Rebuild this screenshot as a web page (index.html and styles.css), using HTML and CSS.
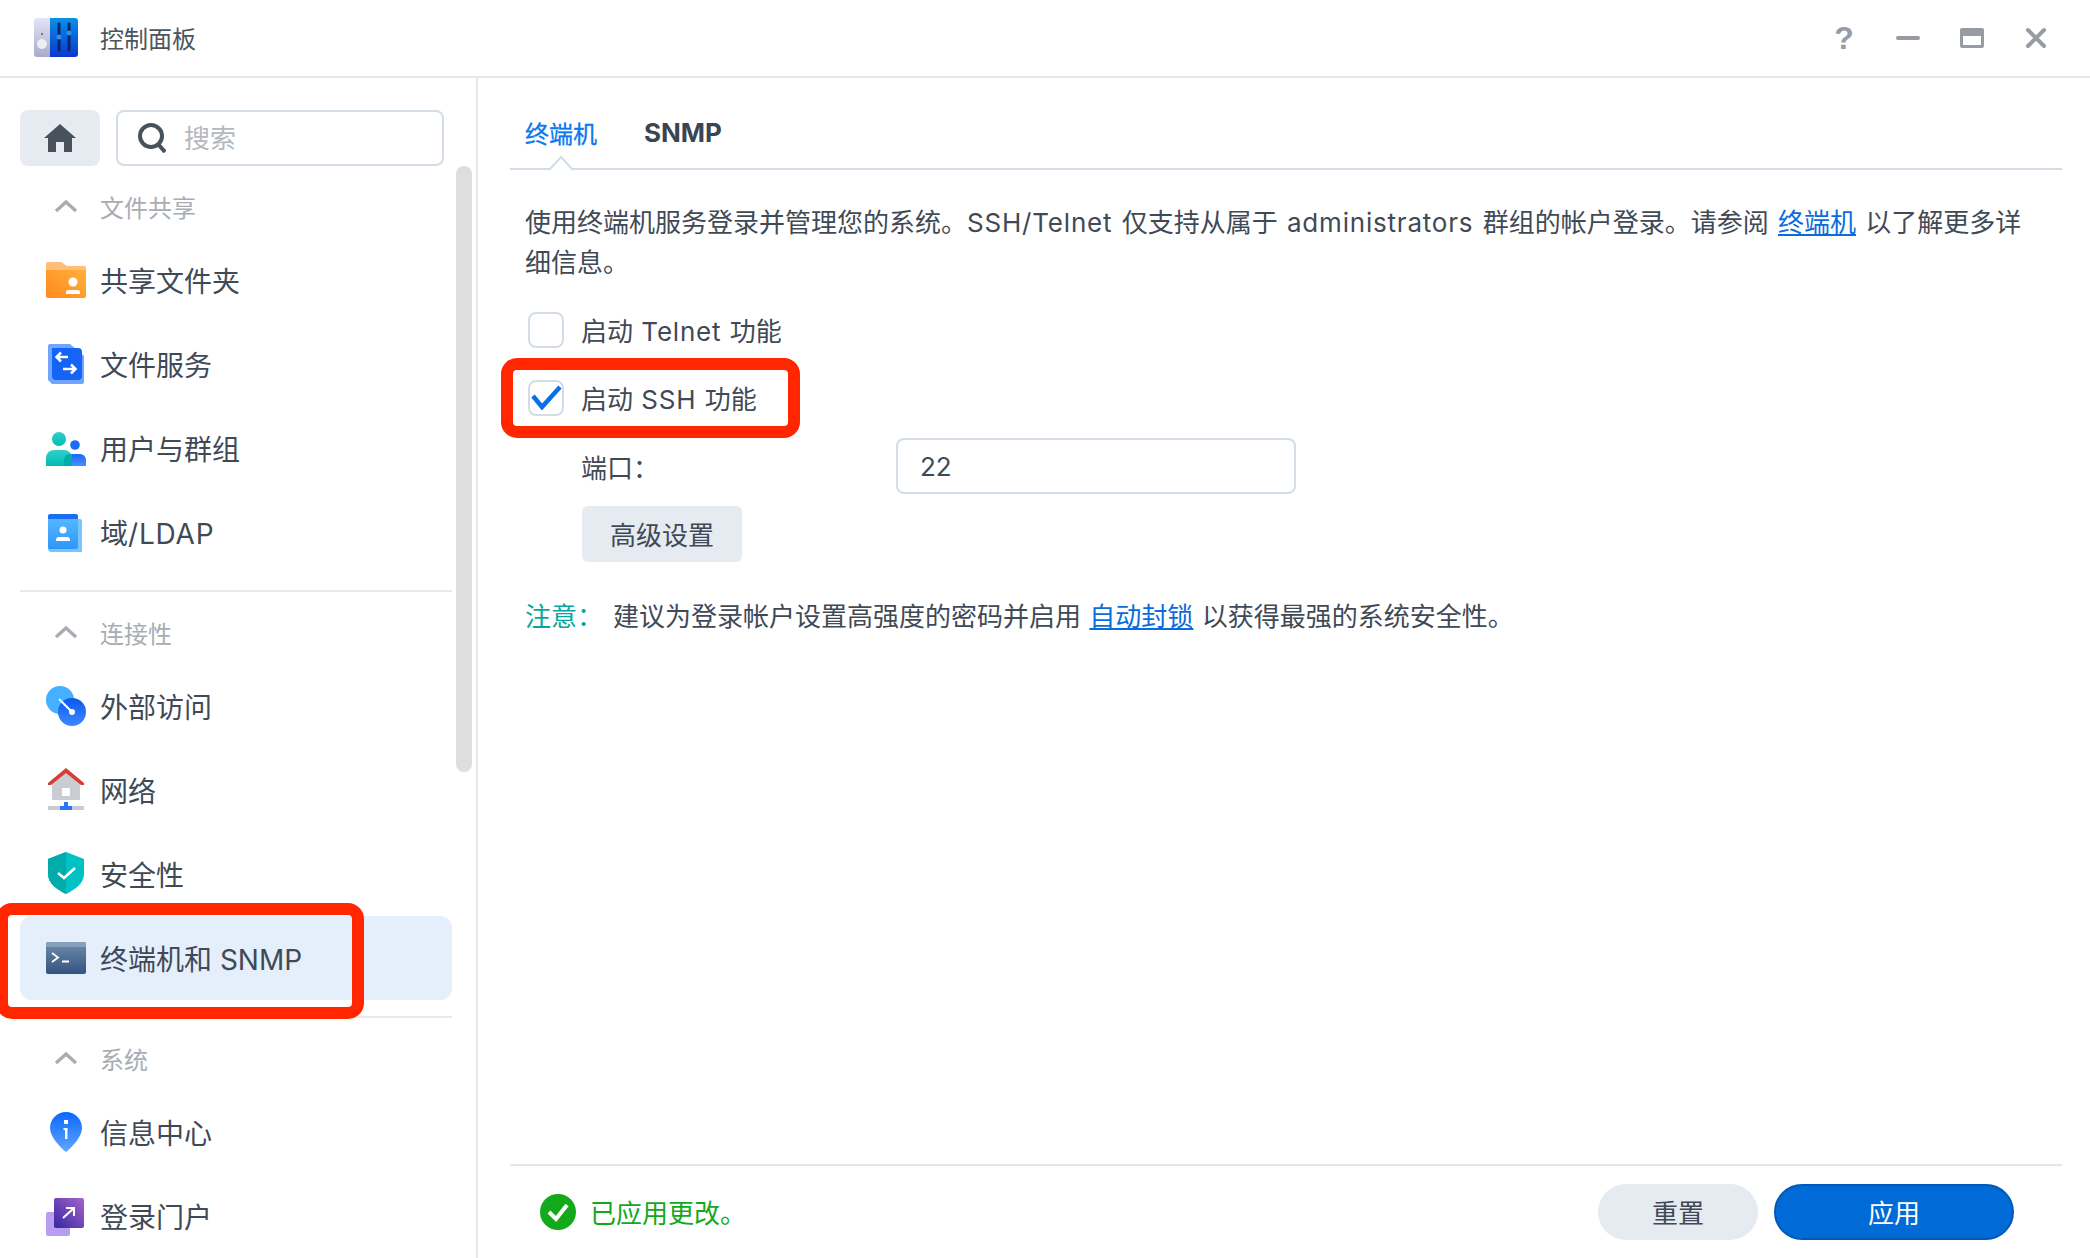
FILE: index.html
```html
<!DOCTYPE html>
<html lang="zh-CN">
<head>
  <meta charset="UTF-8" />
  <meta name="viewport" content="width=device-width, initial-scale=1.0" />
  <title>控制面板</title>
  <link rel="stylesheet" href="styles.css">
</head>
<body>
  <div class="title-bar">
    <svg class="app-icon" viewBox="0 0 44 40">
      <defs>
        <linearGradient id="appLeft" x1="0" y1="0" x2="0" y2="1"><stop offset="0" stop-color="#e4e5f6"/><stop offset="1" stop-color="#a9a9ca"/></linearGradient>
        <linearGradient id="appRight" x1="0" y1="0" x2="0" y2="1"><stop offset="0" stop-color="#0a90e4"/><stop offset="1" stop-color="#0b37cf"/></linearGradient>
      </defs>
      <path d="M3 0H16V39H3a3 3 0 0 1-3-3V3a3 3 0 0 1 3-3z" fill="url(#appLeft)"/>
      <path d="M16 0H41a3 3 0 0 1 3 3V36a3 3 0 0 1-3 3H16z" fill="url(#appRight)"/>
      <circle cx="8" cy="26" r="5" fill="#eeeef8"/>
      <circle cx="8" cy="16" r="1" fill="#555a78"/>
      <path d="M25 6V32M35 6V32" stroke="#06286e" stroke-width="3" stroke-linecap="round"/>
      <circle cx="25" cy="19" r="2.500" fill="#2f8cf5"/>
      <circle cx="35" cy="15" r="2.500" fill="#2f8cf5"/>
    </svg>
    <div class="app-title">控制面板</div>
    <div class="window-controls">
      <span class="win-btn help">?</span>
      <span class="win-btn"><svg viewBox="0 0 24 24"><path d="M2 12H22" stroke-width="4"/></svg></span>
      <span class="win-btn"><svg viewBox="0 0 24 24"><path d="M0 4a2 2 0 0 1 2-2H22a2 2 0 0 1 2 2V20a2 2 0 0 1-2 2H2a2 2 0 0 1-2-2zM3 10V19H21V10z" class="solid"/></svg></span>
      <span class="win-btn"><svg viewBox="0 0 24 24"><path d="M4 4L20 20M20 4L4 20" stroke-width="4"/></svg></span>
    </div>
  </div>

  <div class="main">
    <div class="sidebar">
      <div class="search-row">
        <div class="home-button">
          <svg viewBox="0 0 32 28"><path d="M16 0L32 14H28V28H20V18H12V28H4V14H0z" fill="#47525d"/></svg>
        </div>
        <div class="search-box">
          <svg viewBox="0 0 28 30"><circle cx="13" cy="13" r="11" fill="none" stroke="#47525d" stroke-width="4"/><path d="M20 21L27 29" stroke="#47525d" stroke-width="4"/></svg>
          <input type="text" placeholder="搜索">
        </div>
      </div>
      <div class="scroll-thumb"></div>

      <div class="nav-group">
        <div class="nav-head">
          <span class="icon-slot"><svg class="chevron" viewBox="0 0 24 14"><path d="M2 12L12 3L22 12"/></svg></span>
          文件共享
        </div>
        <div class="nav-item">
          <svg class="icon-slot" viewBox="0 0 40 44">
            <defs><linearGradient id="folder" x1="0" y1="1" x2="1" y2="0"><stop offset="0" stop-color="#ff8a1c"/><stop offset="1" stop-color="#ffb03d"/></linearGradient></defs>
            <path d="M2 4H15L21 8H38a2 2 0 0 1 2 2V16H0V6a2 2 0 0 1 2-2z" fill="#ffbd7a"/>
            <path d="M0 12H40V38a2 2 0 0 1-2 2H2a2 2 0 0 1-2-2z" fill="url(#folder)"/>
            <circle cx="27" cy="24" r="4.500" fill="#fff"/>
            <path d="M20 34a2 2 0 0 1 2-2H32a2 2 0 0 1 2 2V36H20z" fill="#fff"/>
          </svg>
          共享文件夹
        </div>
        <div class="nav-item">
          <svg class="icon-slot" viewBox="0 0 40 44">
            <path d="M4 2H24L38 14V40a2 2 0 0 1-2 2H6L2 38V4a2 2 0 0 1 2-2z" fill="#6fa5ff"/>
            <path d="M2 6H28a4 4 0 0 1 4 4V34a4 4 0 0 1-4 4H6a4 4 0 0 1-4-4z" fill="#1464f6" transform="translate(4 0)"/>
            <path d="M22 15H11M15 10.500L10.500 15L15 19.500M17 27H29M25 22.500L29.500 27L25 31.500" fill="none" stroke="#fff" stroke-width="2.500"/>
          </svg>
          文件服务
        </div>
        <div class="nav-item">
          <svg class="icon-slot" viewBox="0 0 40 44">
            <defs>
              <linearGradient id="userA" x1="0" y1="0" x2="0" y2="1"><stop offset="0" stop-color="#33cfcb"/><stop offset="1" stop-color="#00bcb4"/></linearGradient>
              <linearGradient id="userB" x1="0" y1="0" x2="0" y2="1"><stop offset="0" stop-color="#1768f5"/><stop offset="1" stop-color="#4a90ff"/></linearGradient>
            </defs>
            <circle cx="29" cy="19" r="4.800" fill="#1a6df5"/>
            <path d="M18 40V34a6 6 0 0 1 6-6H34a6 6 0 0 1 6 6V40z" fill="url(#userB)"/>
            <circle cx="13" cy="13" r="7" fill="url(#userA)"/>
            <path d="M0 40V32a8 8 0 0 1 8-8H18a8 8 0 0 1 8 8V40z" fill="url(#userA)"/>
            <path d="M18 40V34a6 6 0 0 1 6-6h2V40z" fill="#00aea8"/>
          </svg>
          用户与群组
        </div>
        <div class="nav-item">
          <svg class="icon-slot" viewBox="0 0 40 44">
            <defs><linearGradient id="ldap" x1="0" y1="0" x2="0" y2="1"><stop offset="0" stop-color="#55b6ff"/><stop offset="1" stop-color="#2e96fa"/></linearGradient></defs>
            <path d="M4 4H30a2 2 0 0 1 2 2V12H2V6a2 2 0 0 1 2-2z" fill="#1a6ef5"/>
            <path d="M4 9H34a2 2 0 0 1 2 2V42H4l-2-2V9z" fill="#78c6ff"/>
            <path d="M2 9H32V37a2 2 0 0 1-2 2H4a2 2 0 0 1-2-2z" fill="url(#ldap)"/>
            <circle cx="17" cy="20" r="3.500" fill="#fff"/>
            <path d="M10 30a3 3 0 0 1 3-3H21a3 3 0 0 1 3 3V31H10z" fill="#fff"/>
          </svg>
          <span>域<span class="en">/LDAP</span></span>
        </div>
      </div>

      <div class="nav-group">
        <div class="nav-head">
          <span class="icon-slot"><svg class="chevron" viewBox="0 0 24 14"><path d="M2 12L12 3L22 12"/></svg></span>
          连接性
        </div>
        <div class="nav-item">
          <svg class="icon-slot" viewBox="0 0 40 44">
            <defs><linearGradient id="ext" x1="0" y1="0" x2="0" y2="1"><stop offset="0" stop-color="#0a58ee"/><stop offset="1" stop-color="#3f88ff"/></linearGradient></defs>
            <circle cx="14" cy="16" r="14" fill="#45b0ff"/>
            <circle cx="26" cy="28" r="14" fill="url(#ext)"/>
            <path d="M13 15L26 28" stroke="#fff" stroke-width="2"/>
            <circle cx="26" cy="28" r="3" fill="#fff"/>
          </svg>
          外部访问
        </div>
        <div class="nav-item">
          <svg class="icon-slot" viewBox="0 0 40 44">
            <path d="M6 14L20 3L34 14V32H6z" fill="#c9cdd2"/>
            <path d="M20 0L38 15V17H35L20 5L5 17H2V15z" fill="#d63d36"/>
            <rect x="16" y="20" width="8" height="8" fill="#fff"/>
            <rect x="2" y="38" width="36" height="4" fill="#c9cdd2"/>
            <path d="M18 34H22V38H26V42H14V38H18z" fill="#2b75f6"/>
          </svg>
          网络
        </div>
        <div class="nav-item">
          <svg class="icon-slot" viewBox="0 0 40 44">
            <path d="M20 0L38 7V22C38 32 28 38 20 42C12 38 2 32 2 22V7z" fill="#00c2c4"/>
            <path d="M20 0V42C12 38 2 32 2 22V7z" fill="#00abac"/>
            <path d="M12 21L18 26L29 16" fill="none" stroke="#fff" stroke-width="2.500"/>
          </svg>
          安全性
        </div>
        <div class="nav-item active">
          <svg class="icon-slot" viewBox="0 0 40 44">
            <defs><linearGradient id="term" x1="0" y1="0" x2="0" y2="1"><stop offset="0" stop-color="#6e8bab"/><stop offset="1" stop-color="#335480"/></linearGradient></defs>
            <rect x="0" y="6" width="40" height="32" rx="2" fill="url(#term)"/>
            <path d="M0 8a2 2 0 0 1 2-2H38a2 2 0 0 1 2 2v3H0z" fill="#86a0bc"/>
            <path d="M6 17L12 21.500L6 26M16 25.500H23" fill="none" stroke="#fff" stroke-width="1.800"/>
          </svg>
          终端机和 SNMP
        </div>
      </div>

      <div class="nav-group last">
        <div class="nav-head">
          <span class="icon-slot"><svg class="chevron" viewBox="0 0 24 14"><path d="M2 12L12 3L22 12"/></svg></span>
          系统
        </div>
        <div class="nav-item">
          <svg class="icon-slot" viewBox="0 0 40 44">
            <defs><linearGradient id="info" x1="0" y1="0" x2="0" y2="1"><stop offset="0" stop-color="#0a68ff"/><stop offset="1" stop-color="#62a5ff"/></linearGradient></defs>
            <path d="M20 2C29 2 36 9 36 18C36 27 26 37 20 42C14 37 4 27 4 18C4 9 11 2 20 2z" fill="url(#info)"/>
            <rect x="18" y="10" width="4" height="4" fill="#fff"/>
            <path d="M17.500 18H21.500V29H19V20H17.500z" fill="#fff"/>
          </svg>
          信息中心
        </div>
        <div class="nav-item">
          <svg class="icon-slot" viewBox="0 0 40 44">
            <defs><linearGradient id="portal" x1="1" y1="0" x2="0" y2="1"><stop offset="0" stop-color="#a663ce"/><stop offset="1" stop-color="#36289e"/></linearGradient></defs>
            <rect x="0" y="18" width="24" height="24" rx="2" fill="#b89df0"/>
            <rect x="8" y="4" width="30" height="30" rx="2" fill="url(#portal)"/>
            <path d="M17 24L28 14M20 14H28V22" fill="none" stroke="#fff" stroke-width="2"/>
          </svg>
          登录门户
        </div>
      </div>
    </div>

    <div class="content">
      <div class="tabs">
        <div class="tab current">终端机
          <svg class="tab-notch" viewBox="0 0 24 15"><path d="M0 14L12 1L24 14"/></svg>
        </div>
        <div class="tab">SNMP</div>
      </div>

      <div class="panel">
        <p class="intro">使用终端机服务登录并管理您的系统。<span class="en">SSH/Telnet</span> 仅支持从属于 <span class="en">administrators</span> 群组的帐户登录。请参阅 <a class="link">终端机</a> 以了解更多详细信息。</p>
        <div class="check-row">
          <span class="checkbox"></span>
          <span>启动 <span class="en">Telnet</span> 功能</span>
        </div>
        <div class="check-row">
          <span class="checkbox"><svg viewBox="0 0 32 32"><path d="M3 14L12 25L30 5" fill="none" stroke="#0a6ee6" stroke-width="4.500"/></svg></span>
          <span>启动 <span class="en">SSH</span> 功能</span>
        </div>
        <div class="port-row">
          <label>端口<span class="colon">：</span></label>
          <input type="text" value="22">
        </div>
        <div class="btn-plain">高级设置</div>
        <p class="note"><span class="note-label">注意<span class="colon">：</span></span>建议为登录帐户设置高强度的密码并启用 <a class="link">自动封锁</a> 以获得最强的系统安全性。</p>
      </div>

      <div class="footer">
        <svg class="ok-icon" viewBox="0 0 36 36"><circle cx="18" cy="18" r="18" fill="#12a91b"/><path d="M9 18L16 25L27 11" fill="none" stroke="#fff" stroke-width="4"/></svg>
        <span class="ok-text">已应用更改。</span>
        <div class="btn-reset">重置</div>
        <div class="btn-apply">应用</div>
      </div>
    </div>
  </div>

  <div class="mark mark-ssh"></div>
  <div class="mark mark-nav"></div>
</body>
</html>
```

FILE: styles.css
```css
html, body {
  overflow: hidden;
  height: 100%;
}
body {
  margin: 0;
  position: relative;
  display: flex;
  flex-direction: column;
  font-family: Inter, "Noto Sans CJK SC", sans-serif;
  font-size: 26px;
  color: #3f4a56;
  background: white;
}
.en {
  letter-spacing: 0.8px;
}
.colon {
  font-family: "Noto Sans CJK TC", sans-serif;
}
.title-bar {
  flex: none;
  height: 76px;
  display: flex;
  align-items: center;
  padding: 0 34px;
  border-bottom: 2px solid #e3e8f0;
}
.app-icon {
  width: 44px;
  height: 40px;
  margin-right: 22px;
}
.app-title {
  font-size: 24px;
  color: #4b5560;
  padding-bottom: 2px;
}
.window-controls {
  margin-left: auto;
  display: flex;
  gap: 24px;
}
.win-btn {
  width: 40px;
  height: 40px;
  display: flex;
  align-items: center;
  justify-content: center;
}
.win-btn svg {
  width: 24px;
  height: 24px;
}
.win-btn path {
  stroke: #979ba3;
  stroke-linecap: round;
  fill: none;
}
.win-btn path.solid {
  stroke: none;
  fill: #979ba3;
  fill-rule: evenodd;
}
.win-btn.help {
  font-family: "Liberation Sans", sans-serif;
  font-size: 32px;
  font-weight: bold;
  color: #979ba3;
}
.main {
  flex: 1;
  min-height: 0;
  display: flex;
}

/* sidebar */
.sidebar {
  flex: none;
  position: relative;
  width: 432px;
  padding: 32px 24px 0 20px;
  border-right: 2px solid #e3e8f0;
  overflow: hidden;
}
.search-row {
  display: flex;
  gap: 16px;
  margin-right: 8px;
}
.home-button {
  flex: none;
  width: 80px;
  height: 56px;
  background: #e6eaf1;
  border-radius: 8px;
  display: flex;
  align-items: center;
  justify-content: center;
}
.home-button svg {
  width: 32px;
  height: 28px;
}
.search-box {
  flex: 1;
  min-width: 0;
  height: 52px;
  border: 2px solid #d3dde8;
  border-radius: 8px;
  display: flex;
  align-items: center;
  padding-left: 20px;
  gap: 18px;
}
.search-box svg {
  flex: none;
  width: 28px;
  height: 30px;
}
.search-box input {
  flex: 1;
  min-width: 0;
  border: none;
  outline: none;
  padding: 0;
  font: inherit;
  background: transparent;
}
.search-box input::placeholder {
  color: #b4b9be;
}
.scroll-thumb {
  position: absolute;
  left: 456px;
  top: 88px;
  width: 16px;
  height: 606px;
  background: #dedede;
  border-radius: 8px;
}
.nav-group {
  padding: 17px 0 16px;
  border-bottom: 2px solid #e6eaf0;
}
.nav-group.last {
  border-bottom: none;
}
.nav-head {
  height: 46px;
  margin-bottom: 7px;
  padding: 0 0 2px 26px;
  display: flex;
  align-items: center;
  gap: 14px;
  font-size: 24px;
  color: #a8adb3;
}
.icon-slot {
  flex: none;
  width: 40px;
  height: 44px;
  display: flex;
  align-items: center;
  justify-content: center;
}
.chevron {
  width: 24px;
  height: 14px;
}
.chevron path {
  fill: none;
  stroke: #a8adb3;
  stroke-width: 3.5px;
}
.nav-item {
  height: 84px;
  padding-left: 26px;
  display: flex;
  align-items: center;
  gap: 14px;
  font-size: 28px;
  border-radius: 12px;
}
.nav-item.active {
  background: #e5effb;
}

/* right side */
.content {
  flex: 1;
  min-width: 0;
  display: flex;
  flex-direction: column;
  padding: 0 28px 0 32px;
}
.tabs {
  flex: none;
  box-sizing: border-box;
  height: 92px;
  display: flex;
  align-items: center;
  gap: 47px;
  padding: 18px 15px 0;
  border-bottom: 2px solid #d3dde8;
}
.tab {
  position: relative;
  font-size: 24px;
  color: #3a4552;
}
.tab + .tab {
  font-size: 26px;
  font-weight: 700;
}
.tab.current {
  color: #0a78ee;
  -webkit-text-stroke: 0.3px #0a78ee;
}
.tab-notch {
  position: absolute;
  left: 50%;
  bottom: -21px;
  width: 24px;
  height: 15px;
  margin-left: -12px;
  overflow: visible;
}
.tab-notch path {
  fill: white;
  stroke: #d3dde8;
  stroke-width: 2px;
}
.panel {
  flex: 1;
  padding: 0 16px 0 15px;
}
.intro {
  margin: 33px 0 0;
  line-height: 40px;
  word-spacing: 2px;
}
.link {
  color: #0a6cdc;
  text-decoration: underline;
}
.check-row {
  display: flex;
  align-items: center;
  gap: 17px;
  height: 34px;
  margin-top: 29px;
  padding: 0 0 2px 3px;
}
.check-row + .check-row {
  margin-top: 32px;
}
.check-row span span {
  margin: 0 1px;
}
.checkbox {
  flex: none;
  width: 32px;
  height: 32px;
  border: 2px solid #d3dde8;
  border-radius: 8px;
  position: relative;
  top: 1px;
}
.checkbox svg {
  display: block;
  width: 32px;
  height: 32px;
}
.port-row {
  display: flex;
  align-items: center;
  margin: 22px 0 0 56px;
}
.port-row label {
  width: 315px;
}
.port-row input {
  width: 352px;
  height: 52px;
  padding: 0 22px;
  border: 2px solid #d3dde8;
  border-radius: 8px;
  outline: none;
  font: inherit;
  color: inherit;
}
.btn-plain {
  box-sizing: border-box;
  width: 160px;
  height: 56px;
  margin: 12px 0 0 57px;
  padding-bottom: 2px;
  background: #e6eaf1;
  border-radius: 6px;
  display: flex;
  align-items: center;
  justify-content: center;
}
.note {
  margin: 33px 0 0;
  line-height: 40px;
  word-spacing: 1px;
}
.note-label {
  color: #05a6a0;
  margin-right: 10px;
}
.footer {
  flex: none;
  display: flex;
  align-items: center;
  height: 92px;
  padding: 0 48px 0 30px;
  border-top: 2px solid #e2e6ef;
}
.ok-icon {
  width: 36px;
  height: 36px;
  margin-right: 14px;
}
.ok-text {
  color: #12a91b;
  margin-right: auto;
  padding-bottom: 2px;
}
.btn-reset,
.btn-apply {
  height: 56px;
  box-sizing: border-box;
  padding-bottom: 2px;
  border-radius: 28px;
  display: flex;
  align-items: center;
  justify-content: center;
}
.btn-reset {
  width: 160px;
  margin-right: 16px;
  background: #e6eaf1;
}
.btn-apply {
  width: 240px;
  background: #006bd6;
  border: 2px solid #0059b8;
  color: white;
}

/* red annotations drawn over the screenshot */
.mark {
  position: absolute;
  box-sizing: border-box;
  border: 12px solid #ff2600;
  border-radius: 16px;
}
.mark-ssh {
  left: 501px;
  top: 358px;
  width: 299px;
  height: 80px;
}
.mark-nav {
  left: -4px;
  top: 903px;
  width: 368px;
  height: 116px;
}
```
